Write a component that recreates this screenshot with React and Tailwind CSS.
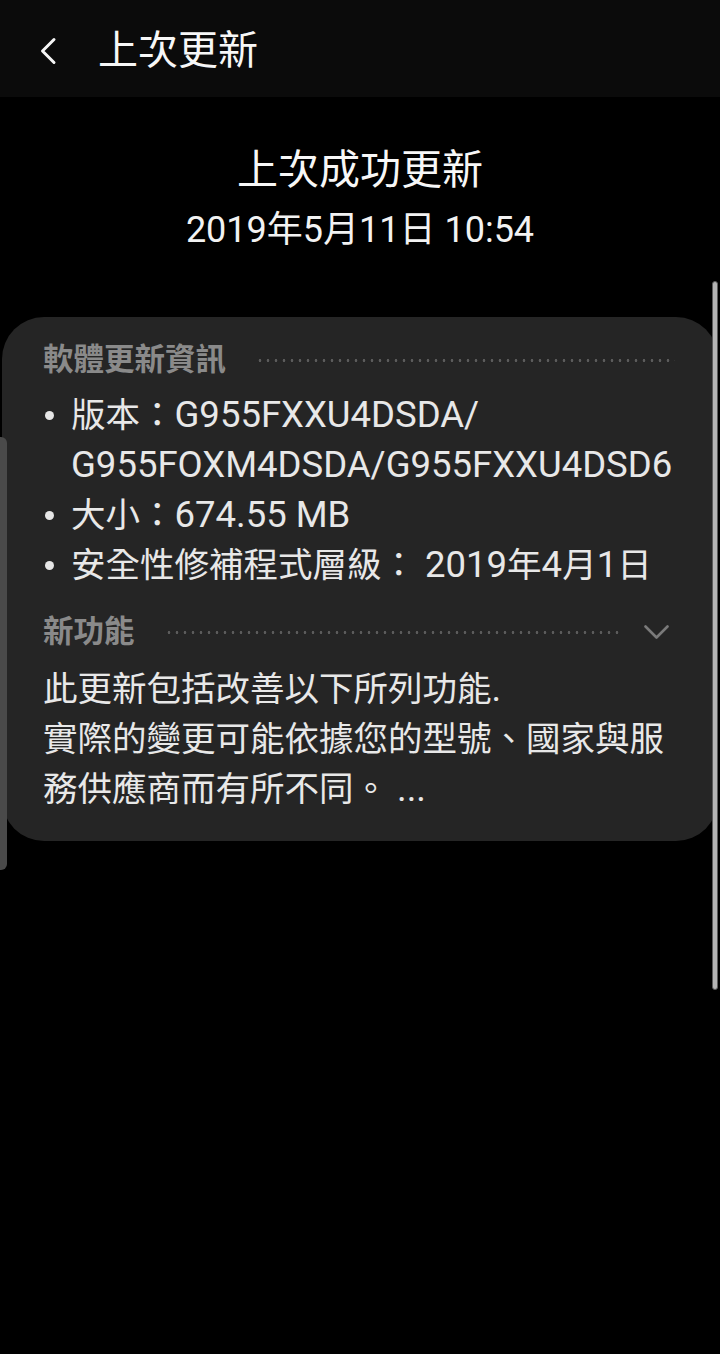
// App.jsx
const FONT = { fontFamily: "Roboto, 'Noto Sans CJK TC', 'Noto Sans CJK SC', sans-serif" };

function Dots() {
  return (
    <div className="h-[3px] flex-1 bg-[radial-gradient(circle,#5c5c5c_1.1px,transparent_1.6px)] bg-[length:8px_3px] bg-repeat-x" />
  );
}

function SectionHead({ label, chevron }) {
  return (
    <div className="flex h-[40px] items-center">
      <span className="text-[30.5px] font-bold leading-[40px] text-[#8a8a8a]">{label}</span>
      <div className="ml-[30px] flex flex-1 items-center">
        <Dots />
        {chevron && (
          <svg className="ml-[22px] mr-[6px]" width="25" height="15" viewBox="0 0 25 15" fill="none">
            <path d="M1.5 1.5 L12.5 12.5 L23.5 1.5" stroke="#7a7a7a" strokeWidth="2.6" strokeLinecap="round" strokeLinejoin="round" />
          </svg>
        )}
      </div>
    </div>
  );
}

function Bullet({ children }) {
  return (
    <li className="flex">
      <span className="flex h-[50px] w-[28px] shrink-0 items-center">
        <span className="ml-[2px] h-[9px] w-[9px] rounded-full bg-[#e6e6e6]" />
      </span>
      <div className="whitespace-nowrap">{children}</div>
    </li>
  );
}

// latin runs are set a little larger than the CJK text, as in the reference
function L({ children }) {
  return <span className="text-[36.5px]">{children}</span>;
}

export default function App() {
  return (
    <div className="relative min-h-[1354px] w-full overflow-hidden bg-black text-[#e8e8e8]" style={FONT}>
      {/* Header */}
      <header className="flex h-[97px] items-center bg-[#0b0b0b] pt-[4px]">
        <svg className="ml-[39px]" width="18" height="28" viewBox="0 0 18 28" fill="none">
          <path d="M15 2.5 L3.5 14 L15 25.5" stroke="#f5f5f5" strokeWidth="3" strokeLinecap="round" strokeLinejoin="round" />
        </svg>
        <h1 className="ml-[41px] text-[40px] font-normal leading-[48px] text-[#f7f7f7]">上次更新</h1>
      </header>

      {/* Last update */}
      <div className="flex flex-col items-center pt-[49px]">
        <div className="text-[41px] leading-[48px] text-[#f7f7f7]">上次成功更新</div>
        <div className="mt-[14px] text-[36px] leading-[44px] text-[#f2f2f2]">2019年5月11日 10:54</div>
      </div>

      {/* Info card */}
      <section className="mx-[2px] mt-[65px] rounded-[42px] bg-[#252525] pb-[27px] pl-[41px] pr-[43px] pt-[23px] text-[34.5px] leading-[50px]">
        <SectionHead label="軟體更新資訊" />
        <ul className="mt-[10px]">
          <Bullet>
            版本：<L>G955FXXU4DSDA/</L>
            <br />
            <L>G955FOXM4DSDA/G955FXXU4DSD6</L>
          </Bullet>
          <Bullet>
            大小：<L>674.55 MB</L>
          </Bullet>
          <Bullet>
            安全性修補程式層級：<L> 2019</L>年<L>4</L>月<L>1</L>日
          </Bullet>
        </ul>

        <div className="mt-[22px]">
          <SectionHead label="新功能" chevron />
        </div>
        <div className="mt-[12px] whitespace-nowrap">
          此更新包括改善以下所列功能<L>.</L>
          <br />
          實際的變更可能依據您的型號、國家與服
          <br />
          務供應商而有所不同。<L> ...</L>
        </div>
      </section>

      {/* Edge panel handle */}
      <div className="absolute left-0 top-[437px] h-[433px] w-[7px] rounded-r-[6px] bg-[#4a4a4a]" />

      {/* Scrollbar */}
      <div className="absolute right-[2px] top-[281px] h-[709px] w-[6px] rounded-full border border-[#5a5a5a] bg-[#b4b4b4]" />
    </div>
  );
}
